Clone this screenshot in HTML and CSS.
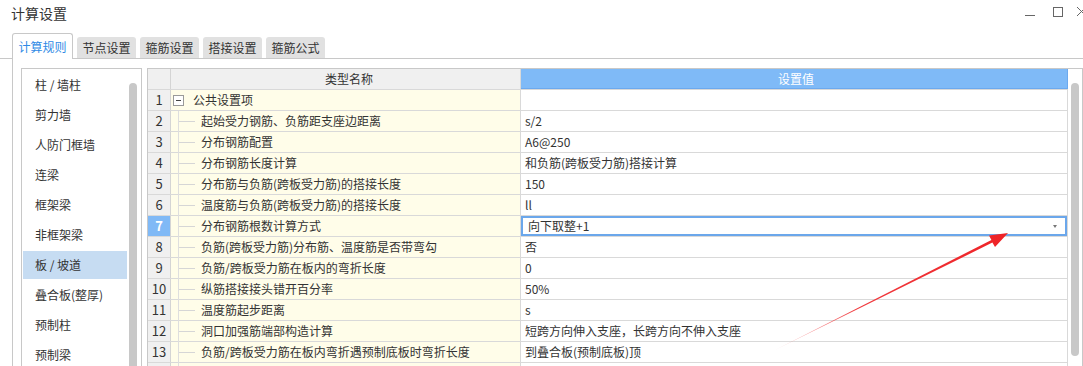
FILE: index.html
```html
<!DOCTYPE html>
<html lang="zh-CN">
<head>
    <meta charset="UTF-8">
    <meta name="viewport" content="width=device-width, initial-scale=1.0">
    <link rel="stylesheet" href="styles.css">
    <title>计算设置</title>
</head>
<body>

    <div class="titlebar">
        <span class="title">计算设置</span>
        <svg class="winctl" width="63" height="20" viewBox="0 0 63 20">
            <line x1="5" y1="15.5" x2="15" y2="15.5" stroke="#666" stroke-width="1"/>
            <rect x="33.5" y="7.5" width="9" height="9" fill="none" stroke="#666" stroke-width="1"/>
            <line x1="57" y1="7" x2="66" y2="16" stroke="#666" stroke-width="1"/>
            <line x1="66" y1="7" x2="57" y2="16" stroke="#666" stroke-width="1"/>
        </svg>
    </div>

    <div class="tabs">
        <div class="tab active">计算规则</div>
        <div class="tab">节点设置</div>
        <div class="tab">箍筋设置</div>
        <div class="tab">搭接设置</div>
        <div class="tab">箍筋公式</div>
    </div>

    <div class="panel">
        <div class="sidebar">
            <ul class="list">
                <li>柱 / 墙柱</li>
                <li>剪力墙</li>
                <li>人防门框墙</li>
                <li>连梁</li>
                <li>框架梁</li>
                <li>非框架梁</li>
                <li class="selected">板 / 坡道</li>
                <li>叠合板(整厚)</li>
                <li>预制柱</li>
                <li>预制梁</li>
            </ul>
            <div class="track"><div class="thumb"></div></div>
        </div>

        <div class="grid">
            <div class="table">
                <div class="row head">
                    <div class="num"></div>
                    <div class="name">类型名称</div>
                    <div class="val">设置值</div>
                </div>
                <div class="row">
                    <div class="num">1</div>
                    <div class="name group"><span class="toggle"><span></span></span>公共设置项</div>
                    <div class="val"></div>
                </div>
                <div class="row">
                    <div class="num">2</div>
                    <div class="name"><span class="branch"><span></span></span>起始受力钢筋、负筋距支座边距离</div>
                    <div class="val">s/2</div>
                </div>
                <div class="row">
                    <div class="num">3</div>
                    <div class="name"><span class="branch"><span></span></span>分布钢筋配置</div>
                    <div class="val">A6@250</div>
                </div>
                <div class="row">
                    <div class="num">4</div>
                    <div class="name"><span class="branch"><span></span></span>分布钢筋长度计算</div>
                    <div class="val">和负筋(跨板受力筋)搭接计算</div>
                </div>
                <div class="row">
                    <div class="num">5</div>
                    <div class="name"><span class="branch"><span></span></span>分布筋与负筋(跨板受力筋)的搭接长度</div>
                    <div class="val">150</div>
                </div>
                <div class="row">
                    <div class="num">6</div>
                    <div class="name"><span class="branch"><span></span></span>温度筋与负筋(跨板受力筋)的搭接长度</div>
                    <div class="val">ll</div>
                </div>
                <div class="row current">
                    <div class="num">7</div>
                    <div class="name"><span class="branch"><span></span></span>分布钢筋根数计算方式</div>
                    <div class="val edit">向下取整+1<span class="caret"></span></div>
                </div>
                <div class="row">
                    <div class="num">8</div>
                    <div class="name"><span class="branch"><span></span></span>负筋(跨板受力筋)分布筋、温度筋是否带弯勾</div>
                    <div class="val">否</div>
                </div>
                <div class="row">
                    <div class="num">9</div>
                    <div class="name"><span class="branch"><span></span></span>负筋/跨板受力筋在板内的弯折长度</div>
                    <div class="val">0</div>
                </div>
                <div class="row">
                    <div class="num">10</div>
                    <div class="name"><span class="branch"><span></span></span>纵筋搭接接头错开百分率</div>
                    <div class="val">50%</div>
                </div>
                <div class="row">
                    <div class="num">11</div>
                    <div class="name"><span class="branch"><span></span></span>温度筋起步距离</div>
                    <div class="val">s</div>
                </div>
                <div class="row">
                    <div class="num">12</div>
                    <div class="name"><span class="branch"><span></span></span>洞口加强筋端部构造计算</div>
                    <div class="val">短跨方向伸入支座，长跨方向不伸入支座</div>
                </div>
                <div class="row">
                    <div class="num">13</div>
                    <div class="name"><span class="branch"><span></span></span>负筋/跨板受力筋在板内弯折遇预制底板时弯折长度</div>
                    <div class="val">到叠合板(预制底板)顶</div>
                </div>
                <div class="row">
                    <div class="num"></div>
                    <div class="name"><span class="branch"><span></span></span></div>
                    <div class="val"></div>
                </div>
            </div>
            <div class="track wide"><div class="thumb short"></div></div>
        </div>
    </div>

    <!-- annotation arrow drawn over the screenshot -->
    <svg class="annot" width="1083" height="366" viewBox="0 0 1083 366">
        <defs>
            <linearGradient id="fade" x1="775" y1="350" x2="1008" y2="233" gradientUnits="userSpaceOnUse">
                <stop offset="0" stop-color="#f26b6e" stop-opacity="0.3"/>
                <stop offset="0.35" stop-color="#f03a3e"/>
                <stop offset="1" stop-color="#ee2226"/>
            </linearGradient>
        </defs>
        <polygon points="775,350 992.4,242.6 995,247 1008,233 989,235.5 991.4,240" fill="url(#fade)"/>
    </svg>

</body>
</html>
```

FILE: styles.css
```css
body {
    margin: 0;
    height: 366px;
    overflow: hidden;
    background-color: #fff;
    color: #333;
    font-family: "Noto Sans CJK SC", "Microsoft YaHei", sans-serif;
    font-size: 12px;
}

.titlebar {
    display: flex;
    justify-content: space-between;
    align-items: flex-start;
    height: 33px;
    padding-left: 11px;
    box-sizing: border-box;
}

.title {
    font-size: 14px;
    line-height: 16px;
    margin-top: 5px;
}

.winctl {
    display: block;
}

.tabs {
    display: flex;
    align-items: flex-end;
    gap: 4px;
    height: 26px;
    padding-left: 12px;
    border-bottom: 1px solid #c8c8c8;
    box-sizing: border-box;
}

.tab {
    width: 59px;
    height: 21px;
    line-height: 21px;
    text-align: center;
    background-color: #e1e1e1;
    border-radius: 3px 3px 0 0;
}

.tab.active {
    width: 61px;
    height: 26px;
    line-height: 25px;
    margin-bottom: -1px;
    background-color: #fff;
    border: 1px solid #c8c8c8;
    border-bottom: none;
    box-sizing: border-box;
    color: #2f8ae5;
}

.panel {
    display: flex;
    margin-left: 12px;
    padding: 9px 0 0 8px;
    border-left: 1px solid #c8c8c8;
    height: 298px;
    overflow: hidden;
}

.sidebar {
    display: flex;
    width: 121px;
    border: 1px solid #c8c8c8;
    border-bottom: none;
    box-sizing: border-box;
}

.list {
    list-style: none;
    margin: 0;
    padding: 2px 0 0 1px;
    width: 104px;
}

.list li {
    height: 28px;
    line-height: 28px;
    margin-bottom: 2px;
    padding-left: 12px;
    white-space: nowrap;
}

.list li.selected {
    background-color: #c6dcf2;
}

.track {
    padding: 14px 0 0 2px;
}

.track.wide {
    padding-left: 3px;
    width: 11px;
}

.thumb {
    width: 8px;
    height: 300px;
    background-color: #c8c8c8;
    border-radius: 4px 4px 0 0;
}

.thumb.short {
    height: 273px;
    border-radius: 4px;
}

.grid {
    display: flex;
    margin-left: 5px;
    width: 936px;
    border: 1px solid #c8c8c8;
    border-bottom: none;
    box-sizing: border-box;
}

.table {
    width: 920px;
}

.row {
    display: flex;
    height: 21px;
    line-height: 20px;
    border-bottom: 1px solid #d9d9d9;
    box-sizing: border-box;
}

.num {
    width: 23px;
    flex: none;
    text-align: center;
    font-size: 13px;
    background-color: #f0f0f0;
    border-right: 1px solid #d4d4d4;
    box-sizing: border-box;
}

.name {
    display: flex;
    width: 350px;
    flex: none;
    padding-left: 7px;
    background-color: #fffde9;
    border-right: 1px solid #d9d9d9;
    box-sizing: border-box;
    white-space: nowrap;
}

.val {
    display: flex;
    flex: 1;
    padding-left: 4px;
    border-right: 1px solid #d9d9d9;
    white-space: nowrap;
}

.row.head .name {
    justify-content: center;
    background-color: #f0f0f0;
}

.row.head .val {
    justify-content: center;
    background-color: #7fbaf7;
    border-right-color: #6ca9ee;
    color: #fff;
    box-shadow: inset 0 -1px 0 #6ca9ee;
}

.group {
    align-items: center;
    padding-left: 2px;
}

.toggle {
    display: inline-flex;
    align-items: center;
    justify-content: center;
    width: 11px;
    height: 11px;
    margin-right: 9px;
    border: 1px solid #9a9a9a;
    box-sizing: border-box;
    background-color: #fff;
}

.toggle span {
    width: 5px;
    height: 1px;
    background-color: #444;
}

.branch {
    display: inline-flex;
    align-items: center;
    width: 17px;
    margin-right: 6px;
    margin-bottom: -1px;
    border-left: 1px solid #dedede;
    box-sizing: border-box;
}

.branch span {
    width: 16px;
    height: 1px;
    background-color: #d6d6d6;
}

.row.current .num {
    background-color: #80b9f6;
    color: #fff;
    font-weight: bold;
}

.val.edit {
    align-items: center;
    padding-left: 7px;
    box-shadow: inset 0 0 0 2px #6ba7eb;
}

.caret {
    margin-left: auto;
    margin-right: 10px;
    width: 0;
    height: 0;
    border-left: 2.5px solid transparent;
    border-right: 2.5px solid transparent;
    border-top: 3px solid #777;
}

.annot {
    position: absolute;
    top: 0;
    left: 0;
    pointer-events: none;
}
```
